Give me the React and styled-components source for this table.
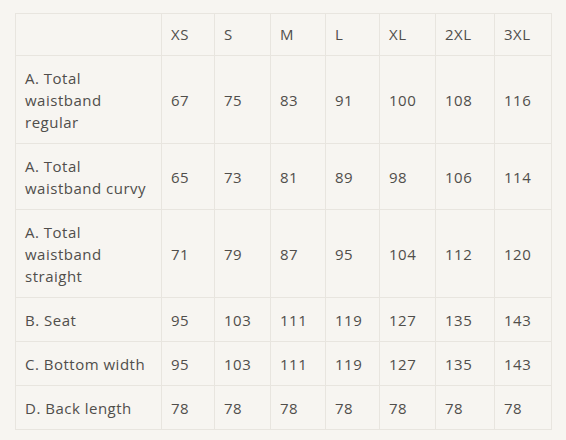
import styled, { createGlobalStyle } from "styled-components";

const GlobalStyle = createGlobalStyle`
  html, body {
    margin: 0;
    padding: 0;
    background: #f7f5f1;
  }
  body {
    font-family: "Open Sans", "Liberation Sans", sans-serif;
  }
`;

const sizes = ["XS", "S", "M", "L", "XL", "2XL", "3XL"];
const widths = [146, 53, 56, 55, 54, 56, 59, 57];

const rows = [
  { label: "A. Total waistband regular", values: [67, 75, 83, 91, 100, 108, 116] },
  { label: "A. Total waistband curvy", values: [65, 73, 81, 89, 98, 106, 114] },
  { label: "A. Total waistband straight", values: [71, 79, 87, 95, 104, 112, 120] },
  { label: "B. Seat", values: [95, 103, 111, 119, 127, 135, 143] },
  { label: "C. Bottom width", values: [95, 103, 111, 119, 127, 135, 143] },
  { label: "D. Back length", values: [78, 78, 78, 78, 78, 78, 78] },
];

const Page = styled.div`
  padding: 13px 15px;
`;

const Table = styled.table`
  border-collapse: collapse;
  table-layout: fixed;
  width: 537px;
  color: #504e4b;
  font-size: 15px;
  line-height: 22px;
  letter-spacing: 0.5px;
`;

const Cell = styled.td`
  border: 1px solid #e8e5df;
  padding: 11px 9px 10px;
  text-align: left;
  vertical-align: middle;
  font-weight: 400;
`;

const HeadCell = styled(Cell).attrs({ as: "th" })`
  padding: 9px 9px 10px;
`;

export default function App() {
  return (
    <>
      <GlobalStyle />
      <Page>
        <Table>
          <colgroup>
            {widths.map((w, i) => (
              <col key={i} style={{ width: w }} />
            ))}
          </colgroup>
          <thead>
            <tr>
              <HeadCell />
              {sizes.map((s) => (
                <HeadCell key={s}>{s}</HeadCell>
              ))}
            </tr>
          </thead>
          <tbody>
            {rows.map((r) => (
              <tr key={r.label}>
                <Cell>{r.label}</Cell>
                {r.values.map((v, i) => (
                  <Cell key={i}>{v}</Cell>
                ))}
              </tr>
            ))}
          </tbody>
        </Table>
      </Page>
    </>
  );
}
